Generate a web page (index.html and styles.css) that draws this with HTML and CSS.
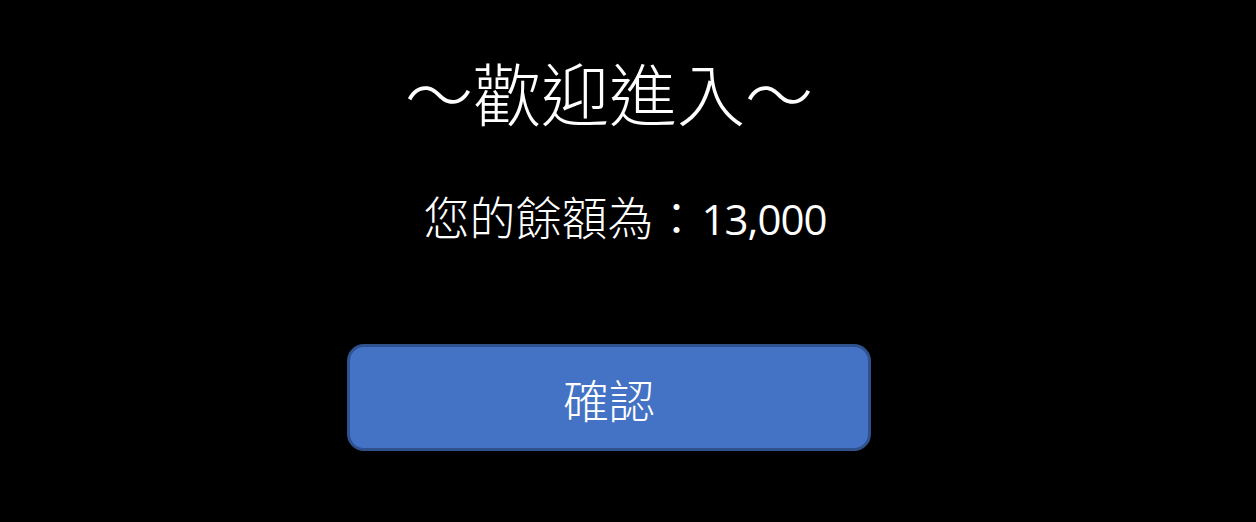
FILE: index.html
```html
<!DOCTYPE html>
<html lang="zh-Hant">
<head>
<meta charset="utf-8">
<link rel="stylesheet" href="styles.css">
</head>
<body>
<div class="stage">
  <h1 class="title">～歡迎進入～</h1>
  <p class="balance">您的餘額為：<span class="amount">13,000</span></p>
  <button class="confirm">確認</button>
</div>
</body>
</html>
```
FILE: styles.css
```css
html, body {
  margin: 0;
  padding: 0;
  background: #000;
  width: 1256px;
  height: 522px;
  overflow: hidden;
}
.stage {
  width: 1218px;
  display: flex;
  flex-direction: column;
  align-items: center;
  padding-top: 58px;
  font-family: "Noto Sans CJK TC", "Noto Sans", sans-serif;
  color: #fff;
}
.title {
  margin: 0;
  font-size: 68px;
  line-height: 68px;
  font-weight: 300;
}
.balance {
  margin: 66px 0 0 0;
  padding-left: 32px;
  font-size: 46px;
  line-height: 46px;
  font-weight: 300;
}
.amount {
  font-family: "Open Sans", "Noto Sans", sans-serif;
  font-weight: 500;
  font-size: 42px;
  letter-spacing: -1px;
  margin-left: 2px;
}
.confirm {
  margin-top: 102px;
  width: 524px;
  height: 107px;
  box-sizing: border-box;
  background: #4472c4;
  border: 3px solid #2f528f;
  border-radius: 17px;
  color: #fff;
  font-family: "Noto Sans CJK TC", "Noto Sans", sans-serif;
  font-size: 46px;
  font-weight: 300;
  line-height: 46px;
  padding: 0;
}
```
